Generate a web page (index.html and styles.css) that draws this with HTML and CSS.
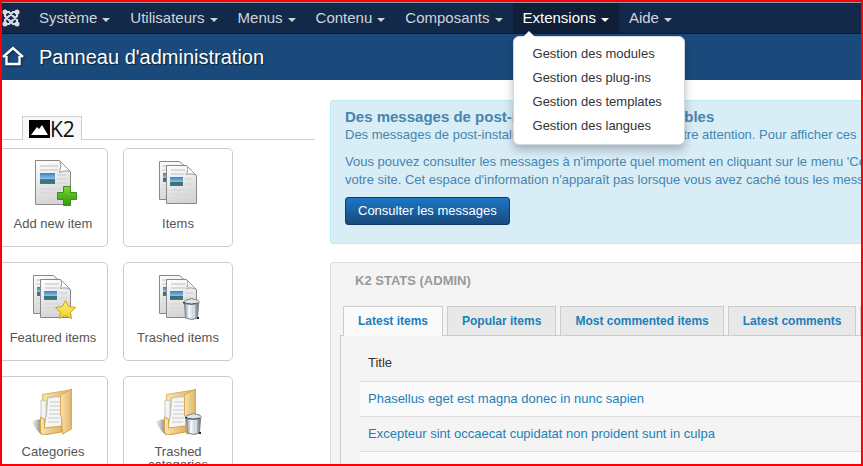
FILE: index.html
```html
<!DOCTYPE html>
<html lang="fr">
<head>
<meta charset="utf-8">
<title>Panneau d'administration</title>
<link rel="stylesheet" href="styles.css">
</head>
<body>
<svg class="defs" aria-hidden="true">
  <defs>
    <linearGradient id="paper" x1="0" y1="0" x2="0.3" y2="1"><stop offset="0" stop-color="#fff"/><stop offset="1" stop-color="#d5d5d5"/></linearGradient>
    <linearGradient id="sky" x1="0" y1="0" x2="0" y2="1"><stop offset="0" stop-color="#2f80d0"/><stop offset=".55" stop-color="#8cc6e8"/><stop offset=".6" stop-color="#476f58"/><stop offset="1" stop-color="#3179b5"/></linearGradient>
    <linearGradient id="green" x1="0" y1="0" x2="0" y2="1"><stop offset="0" stop-color="#8ad04a"/><stop offset=".5" stop-color="#4fb81c"/><stop offset="1" stop-color="#359a08"/></linearGradient>
    <linearGradient id="gold" x1="0" y1="0" x2="0" y2="1"><stop offset="0" stop-color="#fff36b"/><stop offset="1" stop-color="#edd02d"/></linearGradient>
    <linearGradient id="metal"><stop offset="0" stop-color="#8d9aa3"/><stop offset=".35" stop-color="#f3f6f8"/><stop offset=".7" stop-color="#bcc7ce"/><stop offset="1" stop-color="#66737c"/></linearGradient>
    <linearGradient id="folder"><stop offset="0" stop-color="#fbe3ac"/><stop offset="1" stop-color="#dfb566"/></linearGradient>
    <linearGradient id="shade"><stop offset="0" stop-color="#777" stop-opacity=".1"/><stop offset="1" stop-color="#555" stop-opacity=".75"/></linearGradient>
    <g id="docs">
      <path d="M8.500 2.500h20l9 8v30h-29z" fill="url(#paper)" stroke="#888"/>
      <path d="M11 7h14M11 11h4M11 26h4M11 30h4M11 34h4" stroke="#ddd" stroke-width="2"/>
      <path d="M12 14h5v9h-5z" fill="url(#sky)"/>
      <path d="M15.500 6.500h20l10 10v28h-30z" fill="url(#paper)" stroke="#888"/>
      <path d="M20 11h14M20 15h14M34 20h8M34 25h8M20 31h21M20 35h21M20 39h21" stroke="#dadada" stroke-width="2"/>
      <path d="M19 18h13v9H19z" fill="url(#sky)"/>
      <path d="M35.500 6.500c2 2 1 6 0 9 3-1 7-1 10 1z" fill="#fff" stroke="#999"/>
    </g>
    <g id="bin">
      <path d="M33.500 31l1 15q6.500 3 12 0l1-15z" fill="url(#metal)" stroke="#75818a"/>
      <path d="M38 33v13M43 33v13" stroke="#fff" stroke-opacity=".7"/>
      <path d="M32.500 30q1-2 5-2.500l3-1 3 1q4 0 4.500 2v2q-8 2-15.500 0z" fill="#dfe5e8" stroke="#75818a"/>
      <path d="M33 31q8 2 14 0" fill="none" stroke="#4d575e"/>
      <path d="M46 45h2v2h-2zM32 30h2v1h-2z" fill="#222"/>
    </g>
    <g id="files">
      <path d="M1 35q6-4 10-2v15q-6-4-10-13z" fill="url(#shade)"/>
      <path d="M11.500 7.500L38.500 3v40l-25 5z" fill="url(#folder)" stroke="#d9b268"/>
      <path d="M10 13l5 1v32l-5-2z" fill="#f5f5f5" stroke="#c8c8c8"/>
      <path d="M16.500 11q9-2 15-1l-1 30-18 3q4-16 4-32z" fill="#f6f6f6" stroke="#bbb"/>
      <path d="M19 15h10M19 19h10M18 23h11M18 27h11M17 31h12M17 35h11" stroke="#c5c8cc"/>
      <path d="M9.500 30l4 2v9l17-2v6l-19 3-2-3z" fill="url(#folder)" stroke="#d0a550"/>
      <path d="M29.500 8l11-6v40l-9 5-1-18h-1z" fill="url(#folder)" stroke="#d5aa5b"/>
    </g>
  </defs>
</svg>
<div class="frame">
  <nav class="navbar">
    <a class="brand" href="#" aria-label="Joomla">
      <svg width="18" height="18" viewBox="0 0 18 18" fill="none" stroke="#d9dde3" stroke-width="2.200"><path d="M3 3v4l8 8h4M15 3h-4L3 11v4M3 3h4l8 8v4M15 3v4l-8 8H3"/><g fill="#d9dde3" stroke="none"><circle cx="3" cy="3" r="2.500"/><circle cx="15" cy="3" r="2.500"/><circle cx="3" cy="15" r="2.500"/><circle cx="15" cy="15" r="2.500"/></g></svg>
    </a>
    <ul class="menu">
      <li><a href="#">Système<i class="caret"></i></a></li>
      <li><a href="#">Utilisateurs<i class="caret"></i></a></li>
      <li><a href="#">Menus<i class="caret"></i></a></li>
      <li><a href="#">Contenu<i class="caret"></i></a></li>
      <li><a href="#">Composants<i class="caret"></i></a></li>
      <li class="open"><a href="#">Extensions<i class="caret"></i></a>
        <ul class="dropdown">
          <li><a href="#">Gestion des modules</a></li>
          <li><a href="#">Gestion des plug-ins</a></li>
          <li><a href="#">Gestion des templates</a></li>
          <li><a href="#">Gestion des langues</a></li>
        </ul>
      </li>
      <li><a href="#">Aide<i class="caret"></i></a></li>
    </ul>
  </nav>
  <header class="header">
    <svg width="22" height="22" viewBox="0 0 22 22" fill="none" stroke="#fff" stroke-width="2.400" aria-hidden="true"><path d="M1 11L11 2l10 9M4.500 10v8h13v-8"/></svg>
    <h1>Panneau d'administration</h1>
  </header>
  <div class="columns">
    <section class="side">
      <div class="k2-bar">
        <a class="k2-tab" href="#"><svg width="21" height="18" viewBox="0 0 21 18" aria-hidden="true"><path d="M0 0h21v18H0z"/><path d="M2 15l6-8 2 2 3-4 6 10z" fill="#fff"/></svg>K2</a>
      </div>
      <div class="cards">
        <a class="card" href="#"><svg width="48" height="48" viewBox="0 0 48 48" aria-hidden="true"><path d="M6.500 1.500h24l11 11v33h-35z" fill="url(#paper)" stroke="#888"/><path d="M11 7h18M11 11h18M28 16h9M28 20h9M28 24h9M11 30h26M11 34h18M11 38h18" stroke="#dadada" stroke-width="2"/><path d="M11 14h15v11H11z" fill="url(#sky)"/><path d="M30.500 1.500c2 3 1 8 0 12 4-2 8-2 11-1z" fill="#fff" stroke="#999"/><path d="M34.500 27.500h7v6h6v7h-6v6h-7v-6h-6v-7h6z" fill="url(#green)" stroke="#3c8f18"/></svg><span>Add new item</span></a>
        <a class="card" href="#"><svg width="48" height="48" viewBox="0 0 48 48" aria-hidden="true"><use href="#docs" x="-3"/></svg><span>Items</span></a>
        <a class="card" href="#"><svg width="48" height="48" viewBox="0 0 48 48" aria-hidden="true"><use href="#docs" x="-4"/><path d="M36.500 27.500l3 6 7 1-5 5 1 6-6-3-6 3 1-6-5-5 7-1z" fill="url(#gold)" stroke="#c9a51c"/></svg><span>Featured items</span></a>
        <a class="card" href="#"><svg width="48" height="48" viewBox="0 0 48 48" aria-hidden="true"><use href="#docs" x="-3"/><use href="#bin" x="-3" y="-1"/></svg><span>Trashed items</span></a>
        <a class="card" href="#"><svg width="48" height="48" viewBox="0 0 48 48" aria-hidden="true"><use href="#files" x="2"/></svg><span>Categories</span></a>
        <a class="card" href="#"><svg width="48" height="48" viewBox="0 0 48 48" aria-hidden="true"><use href="#files" x="1"/><use href="#bin" x="-1"/></svg><span>Trashed categories</span></a>
      </div>
    </section>
    <main class="main">
      <section class="alert">
        <h2>Des messages de post-installation sont disponibles</h2>
        <p>Des messages de post-installation qui nécessitent toute votre attention. Pour afficher ces</p>
        <p>Vous pouvez consulter les messages à n'importe quel moment en cliquant sur le menu 'Composants'<br>votre site. Cet espace d'information n'apparaît pas lorsque vous avez caché tous les messages.</p>
        <button type="button">Consulter les messages</button>
      </section>
      <section class="well">
        <h2>K2 STATS (ADMIN)</h2>
        <div class="tabs">
          <a class="tab active" href="#">Latest items</a>
          <a class="tab" href="#">Popular items</a>
          <a class="tab" href="#">Most commented items</a>
          <a class="tab" href="#">Latest comments</a>
          <a class="tab" href="#">Statistics</a>
        </div>
        <div class="panel">
          <table>
            <thead><tr><th>Title</th></tr></thead>
            <tbody>
              <tr><td><a href="#">Phasellus eget est magna donec in nunc sapien</a></td></tr>
              <tr><td><a href="#">Excepteur sint occaecat cupidatat non proident sunt in culpa</a></td></tr>
              <tr><td><a href="#">In massa augue semper Cum nulla vel tellus</a></td></tr>
            </tbody>
          </table>
        </div>
      </section>
    </main>
  </div>
</div>
</body>
</html>
```

FILE: styles.css
```css
* { box-sizing: border-box; }
body {
  margin: 0;
  font: 13px/18px "Liberation Sans", Arial, sans-serif;
  color: #333;
  background: #fff;
}
a { color: #1a80b8; text-decoration: none; }
ul { list-style: none; margin: 0; padding: 0; }
h1, h2, p { margin: 0; }
.defs { position: absolute; width: 0; height: 0; }
.frame {
  height: 100vh;
  overflow: hidden;
  border: 2px solid #fb0007;
}

.navbar {
  display: flex;
  height: 32px;
  background: #13294a;
  border-top: 1px solid #8d97a8;
  border-bottom: 1px solid #0c1a30;
}
.brand { display: flex; align-items: center; width: 27px; }
.menu { display: flex; font-size: 15px; line-height: 30px; }
.menu > li { position: relative; }
.menu > li > a { display: flex; align-items: center; gap: 5px; padding: 0 10px; color: #d0d4da; }
.menu > .open > a { color: #fff; background: #0f1f38; }
.caret {
  margin-top: 3px;
  border: 4px solid transparent;
  border-top-color: currentColor;
  border-bottom: 0;
}
.dropdown {
  position: absolute;
  z-index: 5;
  top: 33px;
  left: 0;
  padding: 5px 0 6px;
  width: 172px;
  background: #fff;
  border: 1px solid #d4d7dc;
  border-radius: 6px;
  box-shadow: 0 5px 10px rgba(0, 0, 0, .25);
  font-size: 13px;
  line-height: 24px;
}
.dropdown::before {
  content: "";
  position: absolute;
  top: -6px;
  left: 9px;
  border: 6px solid transparent;
  border-top: 0;
  border-bottom-color: #fff;
}
.dropdown a { display: block; padding: 0 19px; color: #333; white-space: nowrap; }

.header {
  display: flex;
  align-items: center;
  gap: 15px;
  height: 46px;
  background: #1a4a7c;
  color: #fff;
}
.header h1 { font-size: 20px; font-weight: 400; line-height: 24px; text-shadow: 1px 1px 1px rgba(0, 0, 0, .6); }
.header svg { filter: drop-shadow(1px 1px 1px rgba(0, 0, 0, .5)); }

.columns { display: grid; grid-template-columns: 313px minmax(0, 1fr); gap: 15px; }
.side { padding-top: 36px; }
.k2-bar { display: flex; padding-left: 20px; border-bottom: 1px solid #d0d0d0; }
.k2-tab {
  display: flex;
  align-items: center;
  height: 24px;
  margin-bottom: -1px;
  padding: 0 6px;
  background: #f8f8f8;
  border: 1px solid #d0d0d0;
  border-bottom: 0;
  color: #111;
  font: 21px/22px "Open Sans", sans-serif;
}
.cards {
  display: grid;
  grid-template-columns: 110px 110px;
  gap: 15px;
  margin: 8px 0 0 -4px;
}
.card {
  display: flex;
  flex-direction: column;
  align-items: center;
  gap: 10px;
  height: 99px;
  padding: 10px 4px 0;
  border: 1px solid #ccc;
  border-radius: 5px;
  color: #555;
  line-height: 13px;
  text-align: center;
}
.card svg { flex: none; }
.card span { max-width: 100px; }

.main { display: flex; flex-direction: column; gap: 18px; padding-top: 20px; }
.alert {
  height: 144px;
  padding: 7px 14px 0;
  overflow: hidden;
  background: #d9edf7;
  border: 1px solid #bce8f1;
  border-right: 0;
  border-radius: 4px 0 0 4px;
  color: #4585ae;
  white-space: nowrap;
}
.alert h2 { font-size: 15px; line-height: 18px; }
.alert p { margin-bottom: 9px; }
.alert p + p { margin-bottom: 8px; }
.alert button {
  height: 28px;
  padding: 0 12px;
  background: linear-gradient(#1d76c6, #184a7d);
  border: 1px solid #133b66;
  border-radius: 3px;
  color: #fff;
  font: inherit;
}
.well {
  padding: 8px 0 0 9px;
  overflow: hidden;
  background: #f4f4f4;
  border: 1px solid #dcdcdc;
  border-right: 0;
  border-radius: 4px 0 0 0;
}
.well h2 { padding-left: 15px; color: #999; font-size: 13px; line-height: 20px; }
.tabs { display: flex; gap: 4px; padding-left: 3px; margin-top: 15px; }
.tab {
  flex: none;
  height: 29px;
  padding: 0 14px;
  background: #e8e8e8;
  border: 1px solid #ccc;
  border-bottom: 0;
  font-size: 12px;
  font-weight: 700;
  line-height: 28px;
}
.tab.active { position: relative; height: 30px; margin-bottom: -1px; background: #fafafa; }
.panel { padding: 10px 0 20px 19px; border: 1px solid #ccc; border-right: 0; }
table { width: 100%; border-collapse: collapse; }
th { font-weight: 400; text-align: left; }
th, td { height: 35px; padding: 0 8px; border-bottom: 1px solid #ddd; }
tbody tr:nth-child(odd) { background: #fafafa; }
```
